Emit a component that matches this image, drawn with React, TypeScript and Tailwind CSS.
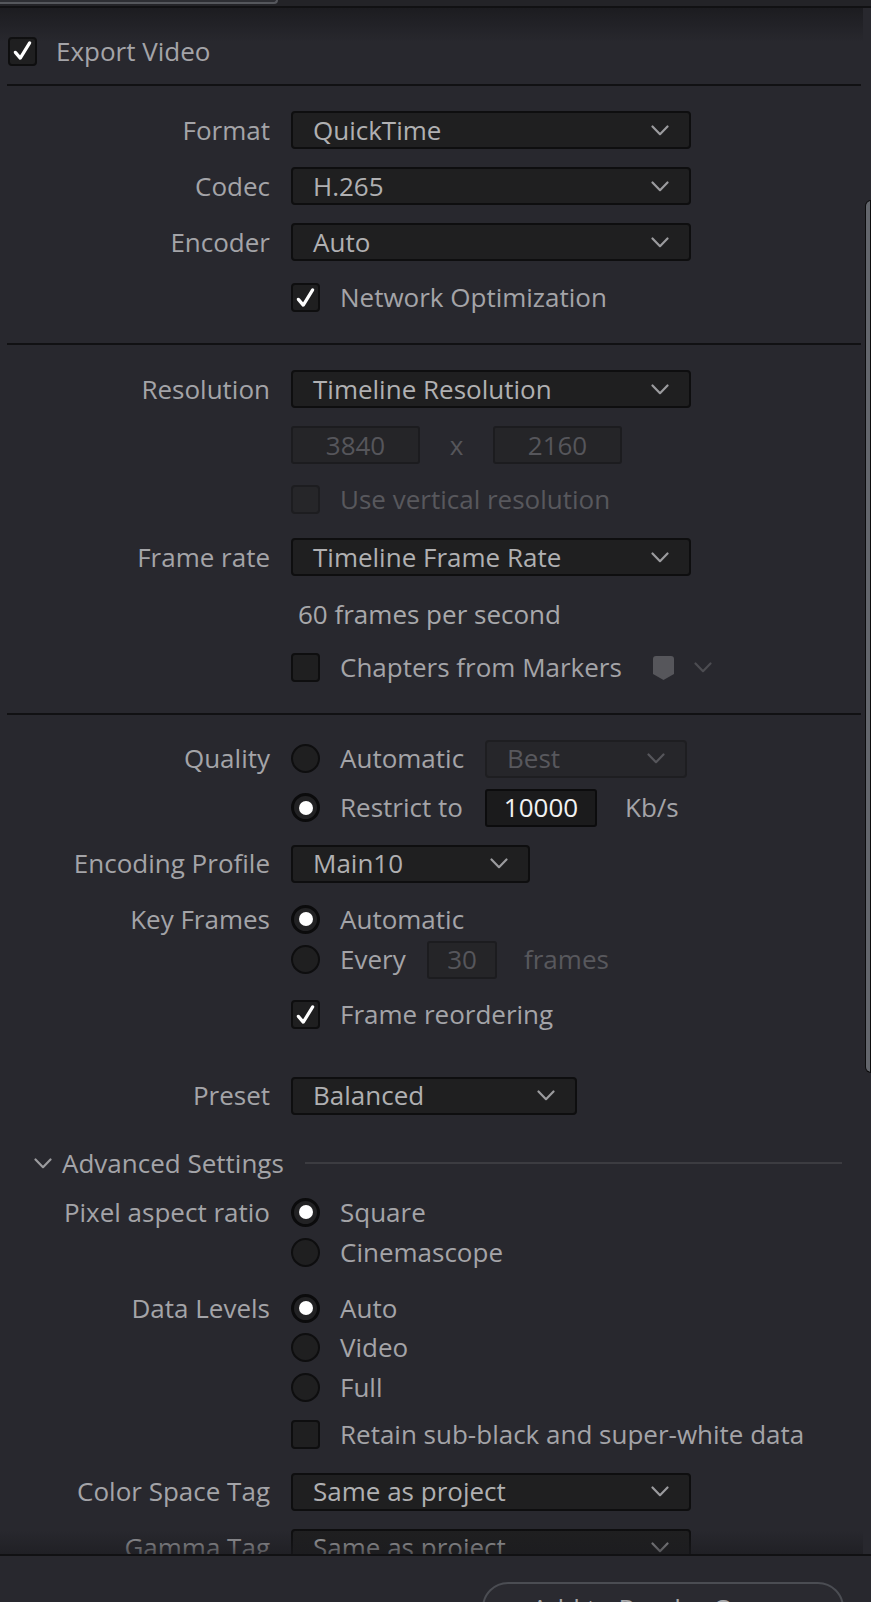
import type { ReactNode } from "react";

const Chevron = ({ className = "" }: { className?: string }) => (
  <svg
    viewBox="0 0 18 11"
    className={`w-[18px] h-[11px] shrink-0 ${className}`}
    fill="none"
    stroke="currentColor"
    strokeWidth="2.2"
    strokeLinecap="round"
    strokeLinejoin="round"
  >
    <path d="M1.5 1.5 L9 9.2 L16.5 1.5" />
  </svg>
);

const Check = () => (
  <svg viewBox="0 0 28 28" className="w-[28px] h-[28px]" fill="none">
    <path
      d="M6 15.5 L11.5 22 L22 5"
      stroke="#ffffff"
      strokeWidth="3.6"
      strokeLinecap="round"
      strokeLinejoin="round"
    />
  </svg>
);

const Checkbox = ({ checked, disabled }: { checked?: boolean; disabled?: boolean }) => (
  <div
    className={`w-[29px] h-[29px] shrink-0 rounded-[4px] border-2 flex items-center justify-center ${
      disabled ? "bg-[#262629] border-[#1d1d20]" : "bg-[#1f1f20] border-[#0e0e0f]"
    }`}
  >
    {checked && <Check />}
  </div>
);

const Radio = ({ checked }: { checked?: boolean }) => (
  <div
    className={`w-[29px] h-[29px] shrink-0 rounded-full flex items-center justify-center ${
      checked ? "bg-[#222224] border-[3px] border-[#0b0b0c]" : "bg-[#1f1f20] border-2 border-[#0e0e0f]"
    }`}
  >
    {checked && <div className="w-[14px] h-[14px] rounded-full bg-white" />}
  </div>
);

interface SelectProps {
  value: string;
  width: string;
  disabled?: boolean;
}

const Select = ({ value, width, disabled }: SelectProps) => (
  <div
    className={`${width} h-[38px] shrink-0 flex items-center justify-between pl-[20px] pr-[20px] rounded-[4px] border-2 ${
      disabled
        ? "bg-[#26262a] border-[#1e1e21] text-[#58585d]"
        : "bg-[#1f1f20] border-[#0e0e0f] text-[#b0b0b2]"
    }`}
  >
    <span className="whitespace-nowrap">{value}</span>
    <Chevron className={disabled ? "text-[#56565b]" : "text-[#9b9b9e]"} />
  </div>
);

const Field = ({ value, width, active }: { value: string; width: string; active?: boolean }) => (
  <div
    className={`${width} h-[38px] shrink-0 flex items-center justify-center rounded-[3px] border-2 ${
      active
        ? "bg-[#1b1b1c] border-[#0c0c0d] text-[#f2f2f2]"
        : "bg-[#252528] border-[#1c1c1f] text-[#56565b]"
    }`}
  >
    {value}
  </div>
);

interface RowProps {
  label?: string;
  className: string;
  children: ReactNode;
}

const Row = ({ label, className, children }: RowProps) => (
  <div className={`flex items-center shrink-0 ${className}`}>
    <div className="w-[263px] shrink-0 text-right whitespace-nowrap">{label}</div>
    <div className="ml-[21px] flex items-center whitespace-nowrap">{children}</div>
  </div>
);

const Divider = ({ className }: { className: string }) => (
  <div className={`h-[2px] shrink-0 bg-[#111113] ${className}`} />
);

const MarkerIcon = () => (
  <svg viewBox="0 0 21 24" className="w-[21px] h-[24px]">
    <path d="M3 0 H18 Q21 0 21 3 V18 L10.5 24 L0 18 V3 Q0 0 3 0 Z" fill="#56565b" />
  </svg>
);

export default function App() {
  return (
    <div className="w-[871px] h-[1602px] overflow-hidden bg-[#28282e] font-['Open_Sans','Noto_Sans',sans-serif] text-[26px] text-[#a4a4a8] flex flex-col">
      {/* tab strip */}
      <div className="h-[6px] shrink-0 bg-[#232327]">
        <div className="w-[278px] h-[4px] bg-[#2d2e33] border-b-2 border-r-2 border-[#55575c] rounded-br-[6px]" />
      </div>
      <div className="h-[2px] shrink-0 bg-[#111113]" />

      {/* scrolling settings */}
      <div className="relative h-[1546px] shrink-0 overflow-hidden flex">
        <div className="flex-1 flex flex-col pl-[7px] pr-[4px]">
          <div className="mt-[28px] h-[30px] ml-[1px] flex items-center shrink-0">
            <Checkbox checked />
            <span className="ml-[19px]">Export Video</span>
          </div>
          <Divider className="mt-[18px]" />

          <Row label="Format" className="mt-[25px] h-[38px]">
            <Select value="QuickTime" width="w-[400px]" />
          </Row>
          <Row label="Codec" className="mt-[18px] h-[38px]">
            <Select value="H.265" width="w-[400px]" />
          </Row>
          <Row label="Encoder" className="mt-[18px] h-[38px]">
            <Select value="Auto" width="w-[400px]" />
          </Row>
          <Row className="mt-[22px] h-[29px]">
            <Checkbox checked />
            <span className="ml-[20px]">Network Optimization</span>
          </Row>
          <Divider className="mt-[31px]" />

          <Row label="Resolution" className="mt-[25px] h-[38px]">
            <Select value="Timeline Resolution" width="w-[400px]" />
          </Row>
          <Row className="mt-[18px] h-[38px]">
            <Field value="3840" width="w-[129px]" />
            <span className="w-[73px] text-center text-[#56565b]">x</span>
            <Field value="2160" width="w-[129px]" />
          </Row>
          <Row className="mt-[21px] h-[29px]">
            <Checkbox disabled />
            <span className="ml-[20px] text-[#58585d]">Use vertical resolution</span>
          </Row>
          <Row label="Frame rate" className="mt-[24px] h-[38px]">
            <Select value="Timeline Frame Rate" width="w-[400px]" />
          </Row>
          <Row className="mt-[19px] h-[38px]">
            <span className="ml-[7px] text-[#a8a8ab]">60 frames per second</span>
          </Row>
          <Row className="mt-[20px] h-[29px]">
            <Checkbox />
            <span className="ml-[20px]">Chapters from Markers</span>
            <span className="ml-[31px] flex items-center">
              <MarkerIcon />
            </span>
            <Chevron className="ml-[20px] text-[#4c4c51]" />
          </Row>
          <Divider className="mt-[31px]" />

          <Row label="Quality" className="mt-[24px] h-[39px]">
            <Radio />
            <span className="ml-[20px] w-[145px]">Automatic</span>
            <Select value="Best" width="w-[202px]" disabled />
          </Row>
          <Row className="mt-[10px] h-[39px]">
            <Radio checked />
            <span className="ml-[20px] w-[145px]">Restrict to</span>
            <Field value="10000" width="w-[112px]" active />
            <span className="ml-[28px]">Kb/s</span>
          </Row>
          <Row label="Encoding Profile" className="mt-[17px] h-[39px]">
            <Select value="Main10" width="w-[239px]" />
          </Row>
          <Row label="Key Frames" className="mt-[21px] h-[30px]">
            <Radio checked />
            <span className="ml-[20px]">Automatic</span>
          </Row>
          <Row className="mt-[6px] h-[39px]">
            <Radio />
            <span className="ml-[20px] w-[87px]">Every</span>
            <Field value="30" width="w-[70px]" />
            <span className="ml-[27px] text-[#58585d]">frames</span>
          </Row>
          <Row className="mt-[21px] h-[29px]">
            <Checkbox checked />
            <span className="ml-[20px]">Frame reordering</span>
          </Row>
          <Row label="Preset" className="mt-[47px] h-[39px]">
            <Select value="Balanced" width="w-[286px]" />
          </Row>

          <div className="mt-[33px] h-[30px] flex items-center shrink-0 pr-[19px]">
            <Chevron className="ml-[27px] w-[15px] h-[10px] text-[#9b9b9e]" />
            <span className="ml-[10px] whitespace-nowrap">Advanced Settings</span>
            <div className="flex-1 ml-[21px] h-[2px] bg-[#3c3c41]" />
          </div>
          <Row label="Pixel aspect ratio" className="mt-[19px] h-[30px]">
            <Radio checked />
            <span className="ml-[20px]">Square</span>
          </Row>
          <Row className="mt-[10px] h-[30px]">
            <Radio />
            <span className="ml-[20px]">Cinemascope</span>
          </Row>
          <Row label="Data Levels" className="mt-[26px] h-[30px]">
            <Radio checked />
            <span className="ml-[20px]">Auto</span>
          </Row>
          <Row className="mt-[9px] h-[30px]">
            <Radio />
            <span className="ml-[20px]">Video</span>
          </Row>
          <Row className="mt-[10px] h-[30px]">
            <Radio />
            <span className="ml-[20px]">Full</span>
          </Row>
          <Row className="mt-[18px] h-[29px]">
            <Checkbox />
            <span className="ml-[20px]">Retain sub-black and super-white data</span>
          </Row>
          <Row label="Color Space Tag" className="mt-[23px] h-[39px]">
            <Select value="Same as project" width="w-[400px]" />
          </Row>
          <Row label="Gamma Tag" className="mt-[17px] h-[39px]">
            <Select value="Same as project" width="w-[400px]" />
          </Row>
        </div>

        {/* scrollbar */}
        <div className="w-[6px] shrink-0 pt-[192px]">
          <div className="h-[873px] bg-[#63666c] border border-[#0d0d0e] rounded-l-[6px]" />
        </div>

        {/* edge shadows */}
        <div className="absolute top-0 left-0 right-[8px] h-[34px] bg-linear-to-b from-[#1c1c20] to-transparent" />
        <div className="absolute bottom-0 left-0 right-[8px] h-[24px] bg-linear-to-b from-transparent to-[#1b1b1f]/60" />
      </div>

      <div className="h-[2px] shrink-0 bg-[#111113]" />
      <div className="flex-1 overflow-hidden">
        <div className="mt-[26px] ml-[482px] w-[362px] h-[52px] rounded-full border-2 border-[#4b4d53] bg-[#2a2a30] flex items-center justify-center text-[#a8a8ab] whitespace-nowrap">
          Add to Render Queue
        </div>
      </div>
    </div>
  );
}
